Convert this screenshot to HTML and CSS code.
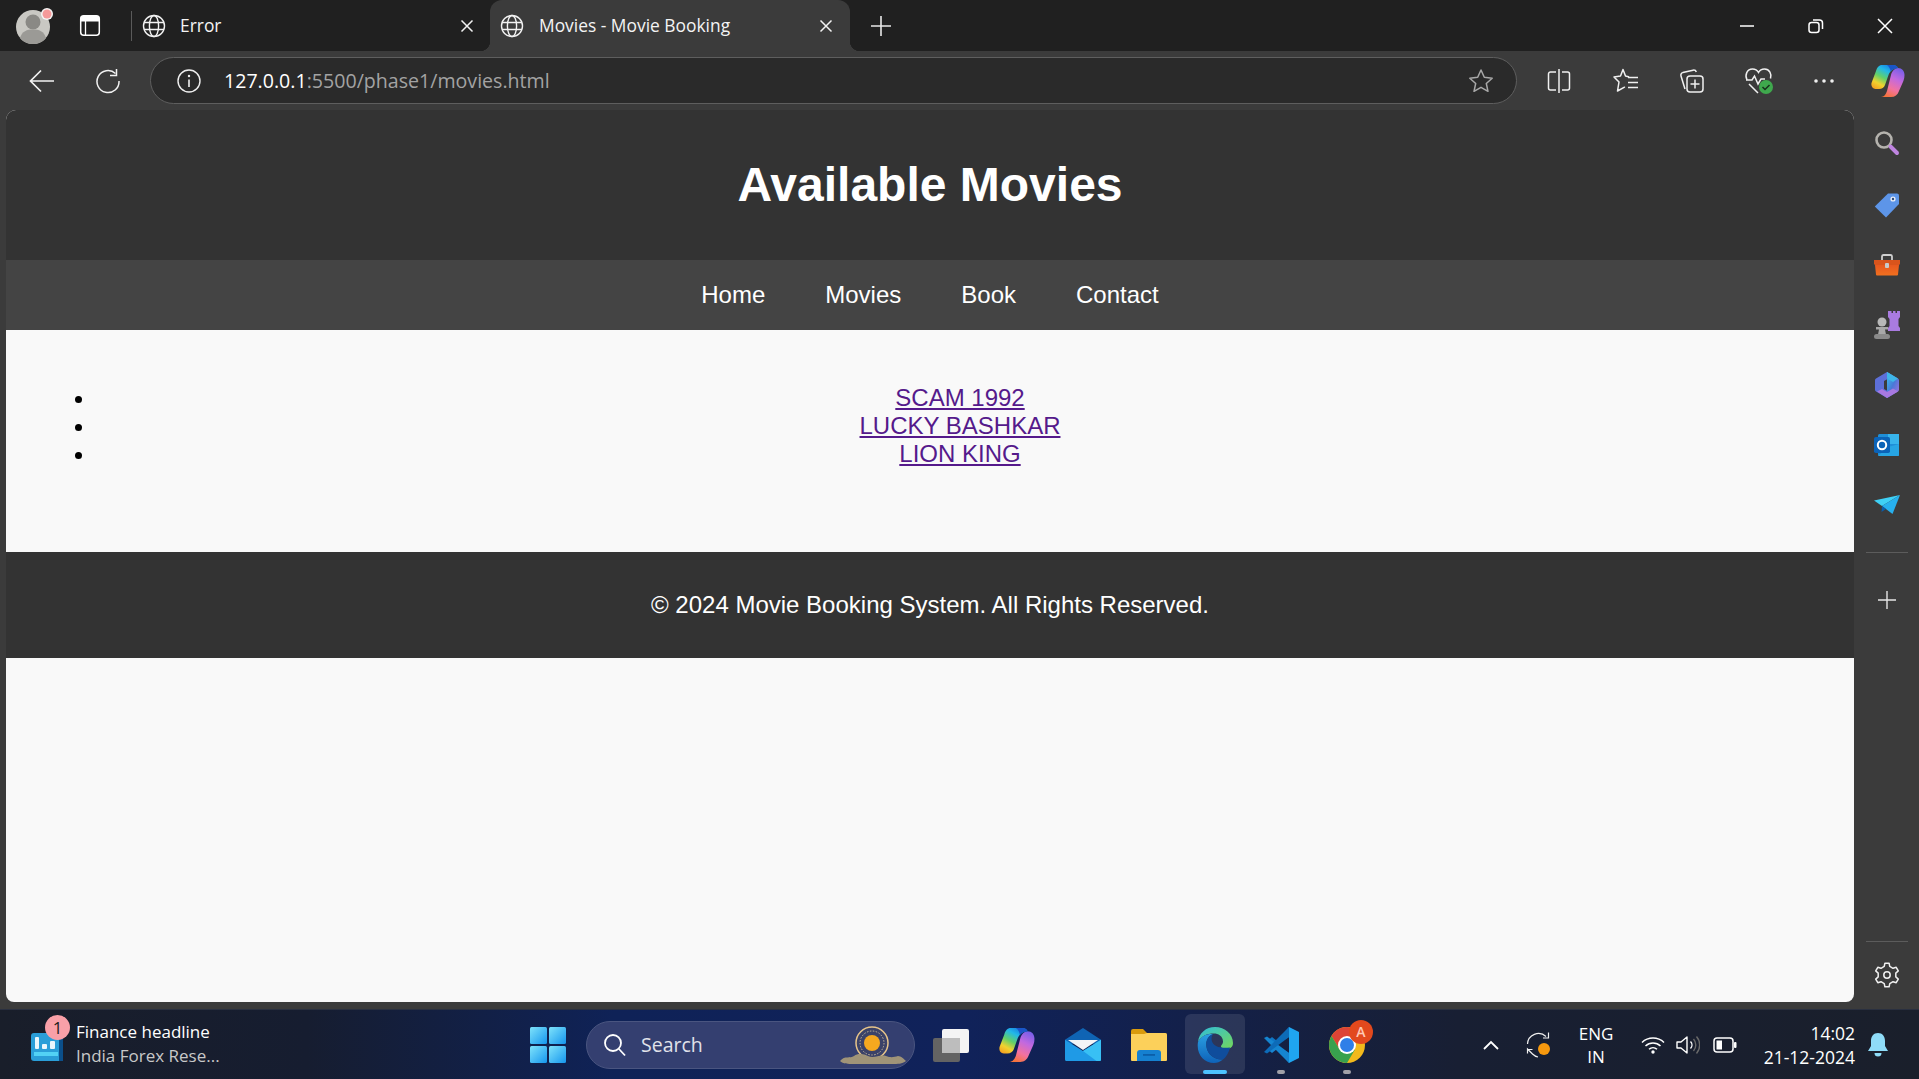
FILE: index.html
```html
<!DOCTYPE html>
<html lang="en">
<head>
<meta charset="utf-8">
<title>Movies - Movie Booking</title>
<link rel="stylesheet" href="styles.css">
</head>
<body>
<svg class="defs" aria-hidden="true">
  <defs>
    <linearGradient id="cpA" x1="0.8" y1="0" x2="0.2" y2="1"><stop offset="0" stop-color="#1473e0"/><stop offset=".28" stop-color="#22b8e8"/><stop offset=".55" stop-color="#62d06a"/><stop offset=".8" stop-color="#f2d22e"/><stop offset="1" stop-color="#f5a623"/></linearGradient>
    <linearGradient id="cpB" x1="0.7" y1="0" x2="0.3" y2="1"><stop offset="0" stop-color="#7a5fe8"/><stop offset=".35" stop-color="#c169e0"/><stop offset=".7" stop-color="#f272a0"/><stop offset="1" stop-color="#f5733c"/></linearGradient>
    <linearGradient id="edgeG" x1="0" y1="0" x2="1" y2="1"><stop offset="0" stop-color="#2fbcdc"/><stop offset="1" stop-color="#74d85a"/></linearGradient>
    <linearGradient id="edgeB" x1="0" y1="0" x2="0" y2="1"><stop offset="0" stop-color="#2a9fe2"/><stop offset="1" stop-color="#0e62b8"/></linearGradient>
    <linearGradient id="winG" x1="0" y1="0" x2="1" y2="1"><stop offset="0" stop-color="#7fe3fb"/><stop offset="1" stop-color="#1596ee"/></linearGradient>
    <linearGradient id="toolG" x1="0" y1="0" x2="0" y2="1"><stop offset="0" stop-color="#e8581f"/><stop offset="1" stop-color="#f0701f"/></linearGradient>
    <linearGradient id="msG" x1="0" y1="0" x2="1" y2="1"><stop offset="0" stop-color="#35c8ee"/><stop offset=".5" stop-color="#4a78d8"/><stop offset="1" stop-color="#b070e0"/></linearGradient>
    <symbol id="globe" viewBox="0 0 24 24"><g fill="none" stroke="currentColor" stroke-width="1.4"><circle cx="12" cy="12" r="10.5"/><ellipse cx="12" cy="12" rx="4.6" ry="10.5"/><path d="M2 8.500h20M2 15.500h20"/></g></symbol>
    <symbol id="closex" viewBox="0 0 16 16"><path d="M2.500 2.500l11 11M13.500 2.500l-11 11" fill="none" stroke="currentColor" stroke-width="1.500"/></symbol>
    <symbol id="copilot" viewBox="0 0 34 32">
      <path d="M20 10C21 6 24 3 27 3c4 0 6.500 3 6.500 7 0 2-.3 4-1.100 6L28 26c-1.500 4-4 6-8 6H10c3 0 5-3 6-6z" fill="url(#cpB)"/>
      <path d="M11 0h11c3 0 4.500 1.500 5 3-4.500 0-8 3-9.500 7L14 20c-1 2.500-3 4-6 4H4.500C1.500 24-.2 21 .5 18L5 6c1-3.500 3-6 6-6z" fill="url(#cpA)"/>
      <path d="M16 0h6c3 0 4.500 1.500 5 3-3 0-5.500 1.300-7.300 3.500C19.500 4 18 1.500 16 0z" fill="#1a55c8"/>
    </symbol>
  </defs>
</svg>

<div class="tabstrip">
  <div class="cell avatar-cell">
    <svg width="40" height="40" viewBox="0 0 40 40"><circle cx="19" cy="21" r="17" fill="#c9c8c3"/><circle cx="19" cy="16" r="7.500" fill="#8a8985"/><path d="M6 32c2-7 7-8.500 13-8.500S30 25 32 32c-3 4-8 6-13 6S9 36 6 32z" fill="#9b9a96"/><circle cx="33" cy="8" r="6" fill="#f4f4f4"/><circle cx="33" cy="8" r="4.500" fill="#f59a9a"/></svg>
  </div>
  <div class="cell toggle-cell">
    <svg width="22" height="23" viewBox="0 0 22 23"><rect x="1.700" y="1.700" width="18.600" height="19.600" rx="3" fill="none" stroke="#fff" stroke-width="1.500"/><path d="M1.700 7.500h18.600V4.700a3 3 0 0 0-3-3H4.700a3 3 0 0 0-3 3z" fill="#fff"/><path d="M6.500 7v14" stroke="#fff" stroke-width="1.300"/></svg>
  </div>
  <div class="tab-sep"></div>
  <div class="tab tab-idle">
    <svg class="tab-globe"><use href="#globe"/></svg>
    <span class="tab-title">Error</span>
    <svg class="tab-close"><use href="#closex"/></svg>
  </div>
  <div class="tab tab-active">
    <svg class="tab-globe"><use href="#globe"/></svg>
    <span class="tab-title">Movies - Movie Booking</span>
    <svg class="tab-close"><use href="#closex"/></svg>
  </div>
  <div class="cell newtab">
    <svg width="22" height="22" viewBox="0 0 22 22"><path d="M11 1v20M1 11h20" stroke="#e8e8e8" stroke-width="1.600" fill="none"/></svg>
  </div>
  <div class="caption">
    <div class="cell cap-btn"><svg width="16" height="16" viewBox="0 0 16 16"><path d="M1 8h14" stroke="#fff" stroke-width="1.500"/></svg></div>
    <div class="cell cap-btn"><svg width="16" height="16" viewBox="0 0 16 16"><rect x="1" y="4.500" width="10" height="10" rx="2.500" fill="none" stroke="#fff" stroke-width="1.500"/><path d="M5 2h6.500A3 3 0 0 1 14.500 5v6" fill="none" stroke="#fff" stroke-width="1.500"/></svg></div>
    <div class="cell cap-btn"><svg width="16" height="16" viewBox="0 0 16 16"><path d="M1 1l14 14M15 1L1 15" stroke="#fff" stroke-width="1.500"/></svg></div>
  </div>
</div>

<div class="toolbar">
  <div class="cell tool-nav">
    <svg width="26" height="26" viewBox="0 0 26 26"><path d="M25 13H2M12 2.500L1.500 13 12 23.500" fill="none" stroke="#f2f2f2" stroke-width="1.700"/></svg>
  </div>
  <div class="cell tool-nav">
    <svg width="26" height="26" viewBox="0 0 26 26"><path d="M20.500 5.500A11 11 0 1 0 24 13" fill="none" stroke="#f2f2f2" stroke-width="1.500"/><path d="M21.500 1v6.500H15" fill="none" stroke="#f2f2f2" stroke-width="1.500"/></svg>
  </div>
  <div class="addressbar">
    <svg class="addr-info" width="24" height="24" viewBox="0 0 24 24"><circle cx="12" cy="12" r="11" fill="none" stroke="#f0f0f0" stroke-width="1.400"/><path d="M12 10.500V18" stroke="#f0f0f0" stroke-width="1.600"/><circle cx="12" cy="7" r="1.200" fill="#f0f0f0"/></svg>
    <span class="url"><span class="url-host">127.0.0.1</span>:5500/phase1/movies.html</span>
    <svg class="addr-star" width="26" height="26" viewBox="0 0 26 26"><path d="M13 2l3.300 7.300 7.900.9-5.900 5.300 1.700 7.800L13 19.300l-7 4 1.700-7.800L1.800 10.200l7.900-.9z" fill="none" stroke="#a8a8a8" stroke-width="1.500" stroke-linejoin="round"/></svg>
  </div>
  <div class="tools">
    <div class="cell tool">
      <svg width="24" height="26" viewBox="0 0 24 26"><path d="M9 4H3.500A2 2 0 0 0 1.500 6v14a2 2 0 0 0 2 2H9M15 4h5.500a2 2 0 0 1 2 2v14a2 2 0 0 1-2 2H15" fill="none" stroke="#f0f0f0" stroke-width="1.500"/><path d="M12 1v24" stroke="#f0f0f0" stroke-width="1.500"/></svg>
    </div>
    <div class="cell tool tool-shift">
      <svg width="26" height="26" viewBox="0 0 26 26"><path d="M15.500 8.800L12.500 8 10 1.500 7.500 8 1 9l5 5-1.500 9 7-3.800" fill="none" stroke="#f0f0f0" stroke-width="1.500" stroke-linejoin="round" stroke-linecap="round"/><path d="M15 9.500h10M15 14.500h10M15 19.500h10" stroke="#f0f0f0" stroke-width="1.500"/></svg>
    </div>
    <div class="cell tool">
      <svg width="26" height="26" viewBox="0 0 26 26"><path d="M6 21L2 8c-.5-1.600.3-3 1.800-3.400L14 2.200c1.500-.3 2.800.4 3.300 1.800" fill="none" stroke="#f0f0f0" stroke-width="1.500"/><rect x="8" y="8" width="16" height="16" rx="3" fill="none" stroke="#f0f0f0" stroke-width="1.500"/><path d="M16 11.500v9M11.500 16h9" stroke="#f0f0f0" stroke-width="1.500"/></svg>
    </div>
    <div class="cell tool tool-shift">
      <svg width="30" height="28" viewBox="0 0 30 28"><path d="M3 13C.5 8 3 2 8.500 2c3 0 5 1.600 6 3.500C15.500 3.600 17.500 2 20.500 2 25.500 2 28 7 26.500 11.500M5 17l9 9" fill="none" stroke="#f0f0f0" stroke-width="1.500"/><path d="M2 13h6l2.500-4 3.500 8 3-5h4" fill="none" stroke="#f0f0f0" stroke-width="1.500"/><circle cx="22" cy="20" r="7" fill="#3fa84d"/><path d="M18.500 20l2.500 2.500 4.500-4.500" fill="none" stroke="#17301c" stroke-width="1.500"/></svg>
    </div>
    <div class="cell tool tool-back">
      <svg width="22" height="6" viewBox="0 0 22 6"><circle cx="3" cy="3" r="1.800" fill="#f0f0f0"/><circle cx="11" cy="3" r="1.800" fill="#f0f0f0"/><circle cx="19" cy="3" r="1.800" fill="#f0f0f0"/></svg>
    </div>
    <div class="cell tool tool-last">
      <svg width="34" height="32"><use href="#copilot"/></svg>
    </div>
  </div>
</div>

<div class="middle">
  <div class="page">
    <header class="site-header"><h1 class="site-title">Available Movies</h1></header>
    <nav class="site-nav">
      <a class="nav-link">Home</a>
      <a class="nav-link">Movies</a>
      <a class="nav-link">Book</a>
      <a class="nav-link">Contact</a>
    </nav>
    <main class="site-main">
      <ul class="movie-list">
        <li><a class="movie-link">SCAM 1992</a></li>
        <li><a class="movie-link">LUCKY BASHKAR</a></li>
        <li><a class="movie-link">LION KING</a></li>
      </ul>
    </main>
    <footer class="site-footer"><p class="footer-text">© 2024 Movie Booking System. All Rights Reserved.</p></footer>
  </div>
  <aside class="sidebar">
    <div class="cell side-item side-first">
      <svg width="26" height="26" viewBox="0 0 26 26"><circle cx="10" cy="10" r="7.500" fill="none" stroke="#b5b3ae" stroke-width="2.600"/><path d="M16.500 16.500L23 23" stroke="#bf85e0" stroke-width="4" stroke-linecap="round"/></svg>
    </div>
    <div class="cell side-item">
      <svg width="26" height="26" viewBox="0 0 26 26"><path d="M14 1.500h9a2 2 0 0 1 2 2V12L12 25.500 .8 14.500z" fill="#5d95e8"/><circle cx="19" cy="7" r="2.600" fill="#e8eef8"/><circle cx="19" cy="7" r="1.200" fill="#2d4a7a"/></svg>
    </div>
    <div class="cell side-item">
      <svg width="28" height="24" viewBox="0 0 28 24"><path d="M9 7V3.500A1.500 1.500 0 0 1 10.500 2h7A1.500 1.500 0 0 1 19 3.500V7" fill="none" stroke="#cfcfcf" stroke-width="1.800"/><path d="M1 7h26v4l-1 1H2l-1-1z" fill="#d9541c"/><path d="M2 12h24l-1 9.500a1 1 0 0 1-1 1H4a1 1 0 0 1-1-1z" fill="url(#toolG)"/><rect x="12" y="10" width="4" height="5" rx="1" fill="#c9c9c9"/></svg>
    </div>
    <div class="cell side-item">
      <svg width="28" height="30" viewBox="0 0 28 30"><path d="M16 1h2.500v2H20V1h2.500v2H24V1h3v6l-1.500 2v7l1.500 2v3H15v-3l1.500-2V9L15 7V1z" fill="#a97be0"/><circle cx="9" cy="12" r="4.500" fill="#b8b8b8"/><path d="M3 17h12v2.500H12l1 5H5l1-5H3z" fill="#a8a8a8"/><rect x="1" y="24" width="16" height="5" rx="2.500" fill="#8a8a8a"/></svg>
    </div>
    <div class="cell side-item">
      <svg width="26" height="28" viewBox="0 0 26 28"><path d="M13 1l11 6.500a2 2 0 0 1 1 1.700v9.600a2 2 0 0 1-1 1.700L13 27z" fill="url(#msG)"/><path d="M13 1L2 7.500a2 2 0 0 0-1 1.700v9.600a2 2 0 0 0 1 1.700L13 27l6-4-9-5v-8l9-5z" fill="#5d6fd8"/><path d="M3 20.500L13 27l11-6.500-5-3-6 3.500-5-3z" fill="#a878e0"/><path d="M13 1l11 6.500-5 3.500-6-3.500z" fill="#3fb6e8"/></svg>
    </div>
    <div class="cell side-item">
      <svg width="26" height="24" viewBox="0 0 26 24"><rect x="4" y="1" width="21" height="22" rx="1.500" fill="#1f8fd8"/><path d="M14 1h11v10H14z" fill="#38b4ec"/><path d="M4 23l10-9 11-3v11a1 1 0 0 1-1 1z" fill="#27a5e4"/><rect x="0" y="4" width="16" height="16" rx="1.800" fill="#0b63b8"/><circle cx="8" cy="12" r="4.200" fill="none" stroke="#fff" stroke-width="2"/></svg>
    </div>
    <div class="cell side-item">
      <svg width="26" height="20" viewBox="0 0 26 20"><path d="M0 5.500L26 0 8 11z" fill="#3fd0f5"/><path d="M26 0L18.500 19 8 11z" fill="#27b0ee"/><path d="M8 11l-.5 6 4.500-3z" fill="#0b5ca8"/></svg>
    </div>
    <div class="side-rule side-rule-top"></div>
    <div class="cell side-plus">
      <svg width="20" height="20" viewBox="0 0 20 20"><path d="M10 1v18M1 10h18" stroke="#e6e6e6" stroke-width="1.400"/></svg>
    </div>
    <div class="side-rule side-rule-bottom"></div>
    <div class="cell side-gear">
      <svg width="26" height="26" viewBox="0 0 26 26"><path d="M10.220 4.440L10.920 1.180H15.080L15.780 4.440L19.020 6.310L22.190 5.290L24.280 8.900L21.800 11.130V14.870L24.280 17.100L22.190 20.710L19.020 19.690L15.780 21.560L15.080 24.820H10.920L10.220 21.560L6.980 19.690L3.810 20.710L1.720 17.100L4.200 14.870V11.130L1.720 8.900L3.810 5.290L6.980 6.310z" fill="none" stroke="#f0f0f0" stroke-width="1.500" stroke-linejoin="round"/><circle cx="13" cy="13" r="3.200" fill="none" stroke="#f0f0f0" stroke-width="1.500"/></svg>
    </div>
  </aside>
</div>

<div class="taskbar">
  <div class="widget">
    <div class="widget-icon">
      <svg width="34" height="30" viewBox="0 0 34 30"><rect x="1" y="1" width="32" height="28" rx="3" fill="#2a9ed8"/><rect x="29" y="1" width="4" height="28" fill="#0b4f8a"/><rect x="4" y="20" width="24" height="4" fill="#52d2f5"/><rect x="5" y="5" width="4" height="12" rx="1" fill="#eaf6fc"/><rect x="12" y="12" width="5" height="5" rx="1" fill="#eaf6fc"/><rect x="20" y="9" width="5" height="8" rx="1" fill="#eaf6fc"/></svg>
      <span class="widget-badge">1</span>
    </div>
    <div class="widget-text">
      <span class="widget-title">Finance headline</span>
      <span class="widget-sub">India Forex Rese...</span>
    </div>
  </div>
  <div class="task-center">
    <div class="cell start">
      <svg width="36" height="36" viewBox="0 0 36 36"><g fill="url(#winG)"><rect x="0" y="0" width="17" height="17" rx="1.500"/><rect x="19" y="0" width="17" height="17" rx="1.500"/><rect x="0" y="19" width="17" height="17" rx="1.500"/><rect x="19" y="19" width="17" height="17" rx="1.500"/></g></svg>
    </div>
    <div class="searchbox">
      <svg class="search-glass" width="24" height="24" viewBox="0 0 24 24"><circle cx="10" cy="10" r="8" fill="none" stroke="#fff" stroke-width="1.800"/><path d="M16 16l6 6.500" stroke="#fff" stroke-width="1.800"/></svg>
      <span class="search-label">Search</span>
      <svg class="search-sun" width="66" height="40" viewBox="0 0 66 40"><circle cx="32" cy="18" r="16" fill="#3b4268" stroke="#e8c58a" stroke-width="1.500"/><circle cx="32" cy="18" r="12" fill="none" stroke="#c7b89a" stroke-width="1" stroke-dasharray="1.500 1.500"/><circle cx="32" cy="18" r="8" fill="#f5a81f"/><path d="M0 36c5-6 10-2 14-5 4-3 10-2 14 0 6 3 12-2 18 0 5 2 8 1 12 0 3 0 6 3 8 5-4 3-8 3-14 3H14C8 39 3 39 0 36z" fill="#a09478"/></svg>
    </div>
    <div class="cell task-app task-view">
      <svg width="36" height="34" viewBox="0 0 36 34"><rect x="0" y="10" width="27" height="24" rx="2" fill="#636363"/><rect x="9" y="1" width="27" height="24" rx="2" fill="#f4f4f4"/><rect x="9" y="10" width="18" height="15" fill="#bdbdbd"/></svg>
    </div>
    <div class="cell task-app">
      <svg width="36" height="34"><use href="#copilot"/></svg>
    </div>
    <div class="cell task-app">
      <svg width="36" height="33" viewBox="0 0 36 33"><path d="M18 0l18 11.700v4H0v-4z" fill="#0f64b4"/><path d="M3 12h30l-15 10z" fill="#f2f4f6"/><path d="M0 11.700L18 23 36 11.700V31.500a1.500 1.500 0 0 1-1.500 1.500h-33A1.500 1.500 0 0 1 0 31.500z" fill="#1f9ae6"/><path d="M36 11.700V31.500a1.500 1.500 0 0 1-1.500 1.500h-3L18 23z" fill="#38c0f4"/></svg>
    </div>
    <div class="cell task-app">
      <svg width="36" height="32" viewBox="0 0 36 32"><path d="M0 2a2 2 0 0 1 2-2h10l4 4h18a2 2 0 0 1 2 2v5H0z" fill="#d99a0c"/><path d="M0 5h13l3-1h18a2 2 0 0 1 2 2v25a1 1 0 0 1-1 1H1a1 1 0 0 1-1-1z" fill="#fcd05a"/><path d="M6 32V24a3 3 0 0 1 3-3h18a3 3 0 0 1 3 3v8z" fill="#1580d0"/><rect x="12" y="25" width="12" height="1.800" fill="#0b5ea8"/></svg>
    </div>
    <div class="cell task-app task-active">
      <svg width="36" height="36" viewBox="0 0 36 36"><path d="M1 15C2 6 9 0 18 0c10 0 18 7 18 16 0 4-3 6-7 6-3 0-5-1-5-2.500 0-1.500 2-2 2-5 0-5.500-5-8-9-8C10 6.500 4 9 1 15z" fill="url(#edgeG)"/><path d="M1 15c3-6 9-8.500 15-8-5 2-7.500 7-6.500 13 1 7 7.500 13 16.500 12.500-3 2.500-6 3.500-9 3.500C7 36-1 27 1 15z" fill="url(#edgeB)"/><path d="M9.500 20c-1-6 1.500-11 6.500-13-2 3-2 7 .5 10 3.500 4 10.500 4 16.500 3.500-1 4.500-3.500 9.500-7 12C17 33 10.500 27 9.500 20z" fill="#0f4d9c"/></svg>
      <span class="task-pill"></span>
    </div>
    <div class="cell task-app">
      <svg width="36" height="36" viewBox="0 0 36 36"><path d="M26 0l10 5v26l-10 5z" fill="#1fa5f0"/><path d="M26 0v10L13 18 6 12.500 9 10l5 4z" fill="#0f75c4"/><path d="M26 36V26L13 18l-7 5.500L9 26l5-4z" fill="#1785d2"/><path d="M1 11l3-1.500L26 26v10z" fill="#1585d0"/><path d="M1 25l3 1.500L26 10V0z" fill="#0d6bb8"/></svg>
      <span class="task-dot"></span>
    </div>
    <div class="cell task-app">
      <svg width="36" height="36" viewBox="0 0 36 36"><circle cx="18" cy="18" r="18" fill="#f2b91c"/><path d="M18 0A18 18 0 0 0 2.500 9L11 23 18 10.500h15.800A18 18 0 0 0 18 0z" fill="#dd4436"/><path d="M2.500 9A18 18 0 0 0 18 36l8-13.500-8 3-7-2.500z" fill="#38a14e"/><circle cx="18" cy="18" r="9" fill="#fff"/><circle cx="18" cy="18" r="7" fill="#2f7fe8"/></svg>
      <span class="chrome-badge">A</span>
      <span class="task-dot"></span>
    </div>
  </div>
  <div class="tray">
    <div class="cell tray-chev"><svg width="18" height="12" viewBox="0 0 18 12"><path d="M2 10l7-7 7 7" fill="none" stroke="#fff" stroke-width="1.800"/></svg></div>
    <div class="cell tray-sync">
      <svg width="28" height="28" viewBox="0 0 28 28"><path d="M1.500 13A11 11 0 0 1 20 5.500M22.500 1.500v5.500H17" fill="none" stroke="#f0f0f0" stroke-width="1.200"/><path d="M1 18.500h5.500M1.500 22.500V18l5 5A11 11 0 0 0 12 26" fill="none" stroke="#f0f0f0" stroke-width="1.200"/><circle cx="18" cy="18" r="6" fill="#f6980e"/></svg>
    </div>
    <div class="tray-lang"><span>ENG</span><span>IN</span></div>
    <div class="cell tray-wifi"><svg width="24" height="18" viewBox="0 0 24 18"><path d="M1 6.500a16 16 0 0 1 22 0M4.500 10a11 11 0 0 1 15 0M8 13.200a6 6 0 0 1 8 0" fill="none" stroke="#fff" stroke-width="1.500"/><circle cx="12" cy="16" r="1.700" fill="#fff"/></svg></div>
    <div class="cell tray-vol"><svg width="24" height="20" viewBox="0 0 24 20"><path d="M1 7h4l6-5v16l-6-5H1z" fill="none" stroke="#fff" stroke-width="1.400" stroke-linejoin="round"/><path d="M14.500 6.500a5 5 0 0 1 0 7" fill="none" stroke="#fff" stroke-width="1.400"/><path d="M17.500 4a9 9 0 0 1 0 12M20.500 1.500a13 13 0 0 1 0 17" fill="none" stroke="#6a6a6a" stroke-width="1.400"/></svg></div>
    <div class="cell tray-batt"><svg width="24" height="16" viewBox="0 0 24 16"><rect x="1" y="1" width="19" height="14" rx="3" fill="none" stroke="#fff" stroke-width="1.500"/><rect x="3.500" y="3.500" width="5.500" height="9" fill="#fff"/><rect x="21" y="5" width="2.500" height="6" rx="1" fill="#fff"/></svg></div>
    <div class="tray-clock"><span>14:02</span><span>21-12-2024</span></div>
    <div class="cell tray-bell"><svg width="20" height="24" viewBox="0 0 20 24"><path d="M10 0c4.500 0 7 3.500 7 8v5l3 5H0l3-5V8c0-4.500 2.500-8 7-8z" fill="#8fdcf8"/><path d="M6.500 20h7a3.500 3.500 0 0 1-7 0z" fill="#8fdcf8"/></svg></div>
  </div>
</div>
</body>
</html>
```
FILE: styles.css
```css
* { box-sizing: border-box; }
html, body { margin: 0; height: 100%; }
body {
  display: flex;
  flex-direction: column;
  height: 1079px;
  overflow: hidden;
  background: #3b3b3b;
  font-family: "Liberation Sans", Arial, sans-serif;
}
.defs { width: 0; height: 0; flex: none; display: block; }
.cell { display: flex; align-items: center; justify-content: center; flex: none; }
svg { display: block; flex: none; }

/* tab strip */
.tabstrip {
  flex: none;
  display: flex;
  align-items: stretch;
  height: 51px;
  background: #202020;
  color: #f2f2f2;
  font-family: "Open Sans", "Noto Sans", sans-serif;
}
.avatar-cell { width: 66px; padding-left: 2px; }
.toggle-cell { width: 48px; }
.tab-sep { flex: none; width: 1px; margin: 11px 0 10px 17px; background: #5a5a5a; }
.tab {
  flex: none;
  position: relative;
  display: flex;
  align-items: center;
  gap: 14px;
  font-size: 17.400px;
  color: #f4f4f4;
}
.tab-idle { width: 358px; padding: 0 11px 0 10px; }
.tab-active {
  width: 360px;
  gap: 15px;
  padding: 0 12px 0 10px;
  background: #3b3b3b;
  border-radius: 12px 12px 0 0;
}
.tab-active::before,
.tab-active::after {
  content: "";
  position: absolute;
  bottom: 0;
  width: 10px;
  height: 10px;
}
.tab-active::before { left: -10px; background: radial-gradient(circle at 0 0, transparent 10px, #3b3b3b 10.500px); }
.tab-active::after { right: -10px; background: radial-gradient(circle at 100% 0, transparent 10px, #3b3b3b 10.500px); }
.tab-globe { width: 24px; height: 24px; color: #f2f2f2; }
.tab-title { flex: 1; white-space: nowrap; line-height: 24px; padding-bottom: 2px; }
.tab-close { width: 16px; height: 16px; margin-right: 4px; color: #f2f2f2; }
.newtab { width: 36px; margin-left: 13px; }
.caption { display: flex; margin-left: auto; }
.cap-btn { width: 69px; }

/* toolbar */
.toolbar {
  flex: none;
  display: flex;
  align-items: center;
  height: 59px;
  padding-left: 9px;
  background: #3b3b3b;
  font-family: "Open Sans", "Noto Sans", sans-serif;
}
.tool-nav { width: 66px; height: 100%; }
.addressbar {
  flex: none;
  display: flex;
  align-items: center;
  width: 1367px;
  height: 47px;
  margin: 0 0 0 9px;
  padding: 0 22px 0 26px;
  background: #2a2a2a;
  border: 1.500px solid #5e5e5e;
  border-radius: 24px;
}
.url { flex: 1; margin-left: 23px; font-size: 19.600px; color: #a3a3a3; white-space: nowrap; }
.url-host { color: #fff; }
.tools { display: flex; margin-left: 9px; height: 100%; }
.tool { width: 66px; }
.tool-shift { margin-left: 1px; }
.tool-back { margin-left: -1px; }
.tool-last { width: 63px; margin-left: -1px; }

/* middle */
.middle { flex: 1; display: flex; min-height: 0; }
.page {
  flex: none;
  width: 1848px;
  height: 892px;
  margin-left: 6px;
  background: #f9f9f9;
  border-radius: 10px 10px 8px 8px;
  overflow: hidden;
}
.site-header { background: #333; padding: 47px 0 48px; color: #fff; text-align: center; }
.site-title { margin: 0; font-size: 48px; line-height: 55px; font-weight: 700; }
.site-nav {
  display: flex;
  justify-content: center;
  gap: 60px;
  padding: 21px 0;
  background: #444;
}
.nav-link { font-size: 24px; line-height: 28px; color: #fff; }
.site-main { padding: 30px 30px 60px; }
.movie-list { margin: 24px 0; padding: 0 0 0 60px; text-align: center; font-size: 24px; line-height: 28px; color: #000; }
.movie-link { color: #551a8b; text-decoration: underline; }
.site-footer { background: #333; padding: 15px 0; color: #fff; text-align: center; }
.footer-text { margin: 24px 0; font-size: 24px; line-height: 28px; }

/* sidebar */
.sidebar { flex: 1; display: flex; flex-direction: column; align-items: center; padding: 3px 0 4px; }
.side-item { width: 100%; height: 60px; }
.side-first { margin-bottom: 2px; }
.side-rule { flex: none; width: 42px; height: 1px; background: #5c5c5c; }
.side-rule-top { margin-top: 17px; }
.side-plus { width: 100%; height: 48px; margin-top: 23px; }
.side-rule-bottom { margin-top: auto; margin-bottom: 3px; }
.side-gear { width: 100%; height: 60px; }

/* taskbar */
.taskbar {
  flex: none;
  display: flex;
  align-items: center;
  height: 70px;
  border-top: 1px solid #2a3040;
  background: linear-gradient(90deg, #191e2a 0%, #161d30 16%, #0f2257 32%, #10225a 50%, #13204a 62%, #181f33 76%, #1a1f2b 100%);
  color: #fff;
  font-family: "Open Sans", "Noto Sans", sans-serif;
}
.widget { flex: none; display: flex; align-items: center; width: 530px; padding-left: 30px; }
.widget-icon { position: relative; width: 34px; height: 30px; margin-top: 4px; }
.widget-badge {
  position: absolute;
  left: 15px;
  top: -17px;
  width: 25px;
  height: 25px;
  border-radius: 50%;
  background: #f9a0a8;
  color: #1c1c1c;
  font-size: 17px;
  line-height: 25px;
  text-align: center;
}
.widget-text { display: flex; flex-direction: column; margin: 0 0 2px 12px; font-size: 17px; line-height: 24px; white-space: nowrap; }
.widget-sub { color: #c8c8c8; }
.task-center { flex: none; display: flex; align-items: center; height: 100%; }
.start { width: 36px; height: 36px; }
.searchbox {
  flex: none;
  display: flex;
  align-items: center;
  width: 329px;
  height: 48px;
  margin-left: 20px;
  padding: 0 8px 0 16px;
  border: 1.500px solid #4a5580;
  border-radius: 24px;
  background: #343f70;
}
.search-label { flex: 1; margin-left: 14px; font-size: 19.500px; color: #e0e2ea; }
.task-app { position: relative; width: 66px; height: 100%; }
.task-view { margin-left: 3px; }
.task-active::before {
  content: "";
  position: absolute;
  left: 3px;
  right: 3px;
  top: 4px;
  bottom: 5px;
  border-radius: 6px;
  background: rgba(255, 255, 255, 0.1);
}
.task-active svg { position: relative; }
.task-pill { position: absolute; bottom: 5px; left: 21px; width: 24px; height: 4px; border-radius: 2px; background: #4cc2ff; }
.task-dot { position: absolute; bottom: 5px; left: 29px; width: 8px; height: 4px; border-radius: 2px; background: #a0a0a8; }
.chrome-badge {
  position: absolute;
  left: 35px;
  top: 10px;
  width: 24px;
  height: 24px;
  border-radius: 50%;
  background: #e2491d;
  color: #ffc9b5;
  font-size: 14px;
  font-weight: 600;
  line-height: 24px;
  text-align: center;
}
.tray { flex: 1; display: flex; align-items: center; height: 100%; padding-left: 97px; }
.tray-chev { width: 28px; }
.tray-sync { width: 32px; margin-left: 19px; }
.tray-lang { flex: none; display: flex; flex-direction: column; align-items: center; width: 50px; margin-left: 15px; font-size: 17px; line-height: 23px; }
.tray-wifi { width: 30px; margin-left: 17px; }
.tray-vol { width: 30px; margin-left: 5px; }
.tray-batt { width: 30px; margin-left: 7px; }
.tray-clock { flex: none; display: flex; flex-direction: column; align-items: flex-end; width: 110px; margin-left: 5px; font-size: 17.500px; line-height: 24px; white-space: nowrap; }
.tray-bell { width: 24px; margin-left: 11px; }
```
